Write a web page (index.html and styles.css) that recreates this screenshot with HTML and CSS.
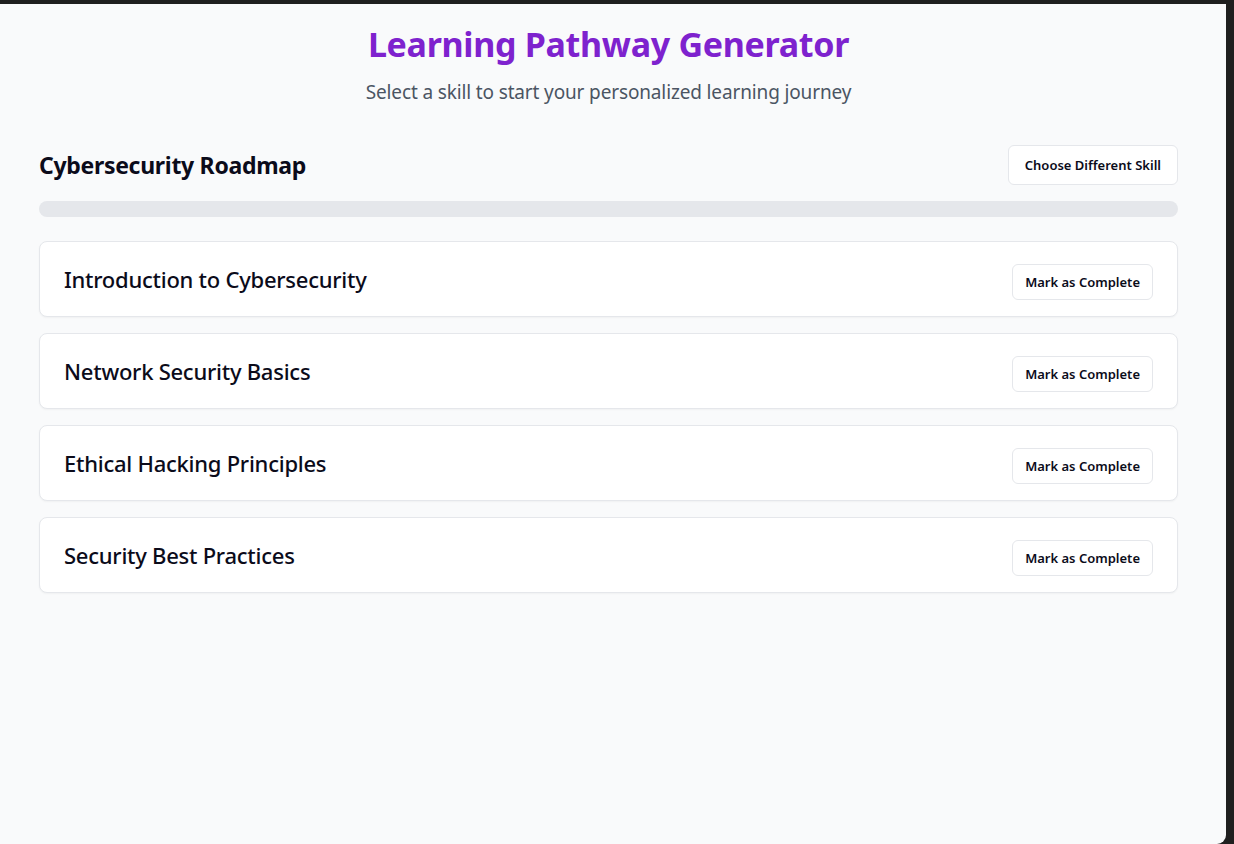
FILE: index.html
```html
<!DOCTYPE html>
<html lang="en">
<head>
<meta charset="utf-8">
<title>Learning Pathway Generator</title>
<link rel="stylesheet" href="styles.css">
</head>
<body>
<div class="window">
  <main class="app">
    <header class="hero">
      <h1 class="hero-title">Learning Pathway Generator</h1>
      <p class="hero-sub">Select a skill to start your personalized learning journey</p>
    </header>
    <section class="roadmap">
      <div class="roadmap-head">
        <h2 class="roadmap-title">Cybersecurity Roadmap</h2>
        <button class="btn btn-lg">Choose Different Skill</button>
      </div>
      <div class="progress"><div class="progress-fill" style="width:0%"></div></div>
      <ul class="steps">
        <li class="step"><span class="step-title">Introduction to Cybersecurity</span><button class="btn btn-step">Mark as Complete</button></li>
        <li class="step"><span class="step-title">Network Security Basics</span><button class="btn btn-step">Mark as Complete</button></li>
        <li class="step"><span class="step-title">Ethical Hacking Principles</span><button class="btn btn-step">Mark as Complete</button></li>
        <li class="step"><span class="step-title">Security Best Practices</span><button class="btn btn-step">Mark as Complete</button></li>
      </ul>
    </section>
  </main>
</div>
</body>
</html>
```
FILE: styles.css
```css
* { box-sizing: border-box; }
html, body { margin: 0; padding: 0; }
body {
  background: #1f1f1f;
  font-family: "Noto Sans", "Open Sans", sans-serif;
  color: #0b0b1a;
  width: 1234px;
  height: 844px;
  overflow: hidden;
}
.window {
  margin-top: 4px;
  width: 1226px;
  height: 840px;
  background: #f9fafb;
  border-bottom-right-radius: 9px;
}
.app {
  width: 1139px;
  margin-left: 39px;
}
.hero { text-align: center; padding-top: 20px; }
.hero-title {
  margin: 0;
  font-size: 34px;
  line-height: 40px;
  font-weight: 700;
  letter-spacing: -0.3px;
  color: #7e22ce;
}
.hero-sub {
  margin: 14px 0 0;
  font-size: 19px;
  line-height: 28px;
  letter-spacing: -0.14px;
  color: #4b5563;
}
.roadmap { margin-top: 39px; }
.roadmap-head {
  display: flex;
  justify-content: space-between;
  align-items: center;
}
.roadmap-title {
  margin: 0;
  font-size: 23px;
  line-height: 32px;
  font-weight: 700;
  letter-spacing: -0.3px;
  color: #0b0b1a;
}
.btn {
  font-family: inherit;
  font-size: 13px;
  font-weight: 600;
  color: #0b0b1a;
  background: #fff;
  border: 1px solid #e5e7eb;
  border-radius: 6px;
  height: 36px;
  padding: 0 12px;
  cursor: pointer;
}
.btn-lg { height: 40px; padding: 0 16px; }
.btn-step { height: 36px; margin-top: 6px; }
.progress {
  margin-top: 16px;
  height: 16px;
  border-radius: 999px;
  background: #e5e7eb;
  overflow: hidden;
}
.progress-fill { height: 100%; background: #7e22ce; }
.steps {
  list-style: none;
  margin: 24px 0 0;
  padding: 0;
  display: flex;
  flex-direction: column;
  gap: 16px;
}
.step {
  display: flex;
  align-items: center;
  justify-content: space-between;
  height: 76px;
  padding: 0 24px;
  background: #fff;
  border: 1px solid #e5e7eb;
  border-radius: 8px;
  box-shadow: 0 1px 2px rgba(0,0,0,0.04);
}
.step-title {
  font-size: 22px;
  font-weight: 500;
  letter-spacing: -0.25px;
  color: #0b0b1a;
}
```
